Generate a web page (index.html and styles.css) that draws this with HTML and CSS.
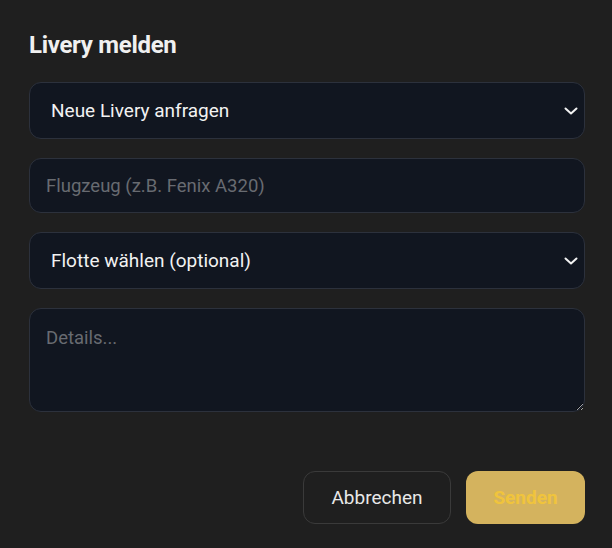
FILE: index.html
```html
<!DOCTYPE html>
<html lang="de">
<head>
<meta charset="utf-8">
<title>Livery melden</title>
<link rel="stylesheet" href="styles.css">
</head>
<body>
<div class="dialog">
  <h2 class="title">Livery melden</h2>
  <form class="form">
    <div class="select-wrap">
      <select class="field select">
        <option>Neue Livery anfragen</option>
      </select>
      <svg class="chev" width="14" height="8" viewBox="0 0 14 8"><path d="M1.5 1.5 7 6.5 12.5 1.5" fill="none" stroke="#f2f2f2" stroke-width="2" stroke-linecap="round" stroke-linejoin="round"/></svg>
    </div>
    <input class="field input" type="text" placeholder="Flugzeug (z.B. Fenix A320)">
    <div class="select-wrap">
      <select class="field select">
        <option>Flotte wählen (optional)</option>
      </select>
      <svg class="chev" width="14" height="8" viewBox="0 0 14 8"><path d="M1.5 1.5 7 6.5 12.5 1.5" fill="none" stroke="#f2f2f2" stroke-width="2" stroke-linecap="round" stroke-linejoin="round"/></svg>
    </div>
    <textarea class="field textarea" placeholder="Details..."></textarea>
    <div class="actions">
      <button type="button" class="btn btn-cancel">Abbrechen</button>
      <button type="button" class="btn btn-send">Senden</button>
    </div>
  </form>
</div>
</body>
</html>
```
FILE: styles.css
```css
html, body {
  margin: 0;
  padding: 0;
  background: #1f1f1f;
}
body {
  font-family: Roboto, "Liberation Sans", sans-serif;
  width: 612px;
  height: 548px;
  overflow: hidden;
}
.dialog {
  padding: 31px 27px 0 29px;
}
.title {
  margin: 0;
  font-size: 24px;
  line-height: 29px;
  font-weight: 700;
  color: #f0f0f0;
  letter-spacing: -0.3px;
}
.form {
  margin-top: 22px;
  display: flex;
  flex-direction: column;
  gap: 19px;
}
.field {
  box-sizing: border-box;
  width: 100%;
  margin: 0;
  background: #111620;
  border: 1px solid #2c313c;
  border-radius: 12px;
  font-family: inherit;
  font-size: 19px;
  color: #f2f2f2;
  outline: none;
}
.select-wrap {
  position: relative;
}
.select {
  height: 57px;
  padding: 0 40px 0 21px;
  appearance: none;
  -webkit-appearance: none;
}
.chev {
  position: absolute;
  right: 7px;
  top: 25px;
  pointer-events: none;
}
.input {
  height: 55px;
  padding: 0 16px;
  font-size: 18.5px;
}
.input::placeholder,
.textarea::placeholder {
  color: #686b71;
}
.textarea {
  height: 104px;
  padding: 18px 16px;
  resize: vertical;
  line-height: 22px;
  font-size: 18.5px;
}
.actions {
  margin-top: 40px;
  display: flex;
  justify-content: flex-end;
  gap: 15px;
}
.btn {
  height: 53px;
  border-radius: 12px;
  font-family: inherit;
  font-size: 19px;
  cursor: pointer;
}
.btn-cancel {
  width: 148px;
  background: transparent;
  border: 1px solid #3a3a3a;
  color: #e8e8e8;
  font-weight: 400;
}
.btn-send {
  width: 119px;
  background: #d4b35e;
  border: none;
  color: #f0c43c;
  font-weight: 700;
}
```
